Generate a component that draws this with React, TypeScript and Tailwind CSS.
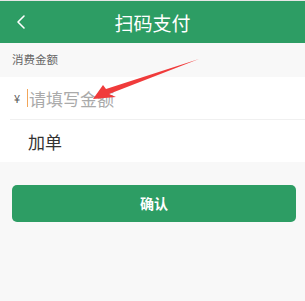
import { ChevronLeft } from 'lucide-react';

const FONT = '"Noto Sans CJK SC", "Liberation Sans", sans-serif';

export default function App() {
  return (
    <div
      className="relative w-[305px] h-[301px] bg-[#f8f8f8] overflow-hidden"
      style={{ fontFamily: FONT }}
    >
      {/* ---- header ---- */}
      <div className="border-t border-[#e6e6e6]">
        <div className="relative h-[42px] bg-[#2d9d64] flex items-center justify-center">
          <ChevronLeft className="absolute left-[9px] top-[9px] h-[24px] w-[24px] text-white" strokeWidth={1.6} />
          <span className="text-[19px] leading-none text-white">扫码支付</span>
        </div>
      </div>

      {/* ---- label ---- */}
      <div className="h-[34px] flex items-center px-3">
        <span className="text-[11.5px] text-[#666]">消费金额</span>
      </div>

      {/* ---- inputs ---- */}
      <div className="bg-white">
        <div className="ml-[10px] h-[43px] flex items-center pl-[4px] border-b border-[#f0f0f0]">
          <span className="text-[11px] text-[#555] w-[13px]">¥</span>
          <span className="w-px h-[18px] bg-[#f2a65a] mr-[1px]" />
          <span className="text-[17px] text-[#aaa] leading-none">请填写金额</span>
        </div>
        <div className="h-[42px] flex items-center pl-[28px]">
          <span className="text-[17px] text-[#333] leading-none">加单</span>
        </div>
      </div>

      {/* ---- confirm ---- */}
      <div className="px-3 pt-[23px]">
        <button className="w-[284px] h-[37px] rounded-[5px] bg-[#2d9d64] text-white text-[14px] font-bold">
          确认
        </button>
      </div>

      {/* ---- annotation arrow ---- */}
      <svg className="absolute left-0 top-0 pointer-events-none" width="305" height="301">
        <polygon
          points="93,99 103,85 106,89 199,59 109,94 116,97"
          fill="#f03b3b"
        />
      </svg>
    </div>
  );
}
